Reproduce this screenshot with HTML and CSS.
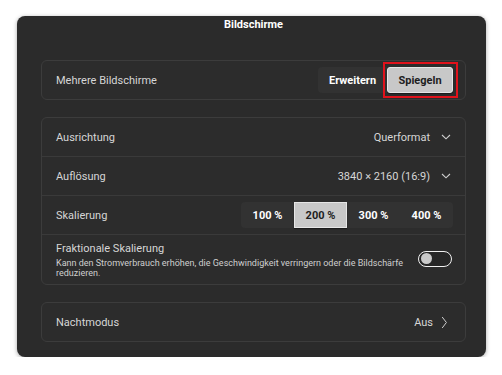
FILE: index.html
```html
<!DOCTYPE html>
<html lang="de">
<head>
<meta charset="utf-8">
<link rel="stylesheet" href="styles.css">
</head>
<body>
<div class="card">
  <div class="title">Bildschirme</div>

  <div class="group">
    <div class="row">
      <span class="label">Mehrere Bildschirme</span>
      <div class="seg seg-mode">
        <div class="seg-item w69">Erweitern</div>
        <div class="seg-item w66 active">Spiegeln<span class="mark"></span></div>
      </div>
    </div>
  </div>

  <div class="group">
    <div class="row">
      <span class="label">Ausrichtung</span>
      <div class="value">Querformat
        <svg class="chev" width="10" height="6" viewBox="0 0 10 6"><path d="M1 1 L5 4.8 L9 1" fill="none" stroke="#cfcfcf" stroke-width="1.1"/></svg>
      </div>
    </div>
    <div class="row">
      <span class="label">Auflösung</span>
      <div class="value">3840 × 2160 (16:9)
        <svg class="chev" width="10" height="6" viewBox="0 0 10 6"><path d="M1 1 L5 4.8 L9 1" fill="none" stroke="#cfcfcf" stroke-width="1.1"/></svg>
      </div>
    </div>
    <div class="row">
      <span class="label">Skalierung</span>
      <div class="seg seg-scale">
        <div class="seg-item w53">100 %</div>
        <div class="seg-item w53 active">200 %</div>
        <div class="seg-item w53">300 %</div>
        <div class="seg-item w53">400 %</div>
      </div>
    </div>
    <div class="row row-tall">
      <div class="text-col">
        <div class="label">Fraktionale Skalierung</div>
        <div class="desc">Kann den Stromverbrauch erhöhen, die Geschwindigkeit verringern oder die Bildschärfe reduzieren.</div>
      </div>
      <div class="toggle"><span class="knob"></span></div>
    </div>
  </div>

  <div class="group">
    <div class="row">
      <span class="label">Nachtmodus</span>
      <div class="value">Aus
        <svg class="chev-r" width="7" height="13" viewBox="0 0 7 13"><path d="M1.2 1 L5.4 6.5 L1.2 12" fill="none" stroke="#cfcfcf" stroke-width="1"/></svg>
      </div>
    </div>
  </div>
</div>
</body>
</html>
```

FILE: styles.css
```css
html, body {
  margin: 0;
  padding: 0;
  background: #ffffff;
}
body {
  font-family: Roboto, "Liberation Sans", sans-serif;
  -webkit-font-smoothing: antialiased;
}
.card {
  margin: 16px 0 0 17px;
  width: 469px;
  height: 341px;
  box-sizing: border-box;
  background: #2b2b2b;
  border-radius: 8px;
  box-shadow: 0 1px 4px rgba(0,0,0,0.35);
  padding: 2px 20px 0 24px;
  display: flex;
  flex-direction: column;
}
.title {
  text-align: center;
  color: #ffffff;
  font-weight: 700;
  font-size: 11px;
  line-height: 14px;
  height: 14px;
  margin-bottom: 28px;
}
.group {
  border: 1px solid #3c3c3c;
  border-radius: 6px;
  background: #2c2c2c;
  margin-bottom: 17px;
}
.row {
  height: 38px;
  display: flex;
  align-items: center;
  justify-content: space-between;
  padding: 0 13px 0 14px;
  border-top: 1px solid #3a3a3a;
}
.row:first-child {
  border-top: none;
}
.row-tall {
  height: 49px;
}
.label {
  color: #d6d6d6;
  font-size: 11px;
  line-height: 13px;
}
.value {
  color: #d6d6d6;
  font-size: 11px;
  display: flex;
  align-items: center;
}
.chev {
  margin-left: 11px;
  margin-right: 1px;
}
.chev-r {
  margin-left: 8px;
  margin-right: 4px;
}
.seg {
  display: flex;
  background: #323232;
  border-radius: 4px;
  height: 26px;
  margin-right: -1px;
}
.seg-item {
  position: relative;
  display: flex;
  align-items: center;
  justify-content: center;
  color: #ffffff;
  font-weight: 700;
  font-size: 11px;
  border-radius: 3px;
  box-sizing: border-box;
}
.w69 { width: 69px; }
.w66 { width: 66px; }
.w53 { width: 53px; }
.seg-item.active {
  background: #c8c8c8;
  color: #1e1e1e;
  border: 1px solid #e6e6e6;
  box-shadow: 0 1px 1px rgba(0,0,0,0.4);
}
.seg-scale .seg-item.active {
  border-radius: 0;
}
.mark {
  position: absolute;
  left: -5px;
  right: -6px;
  top: -6px;
  bottom: -6px;
  border: 2px solid #e0121b;
}
.text-col {
  display: flex;
  flex-direction: column;
  padding-top: 1px;
}
.desc {
  color: #cfcfcf;
  font-size: 9px;
  line-height: 10px;
  width: 352px;
  margin-top: 3px;
}
.toggle {
  width: 30px;
  height: 14px;
  border: 1.5px solid #f0f0f0;
  border-radius: 9px;
  background: #262626;
  margin-top: -2px;
  display: flex;
  align-items: center;
  padding-left: 2px;
}
.knob {
  width: 11px;
  height: 11px;
  border-radius: 50%;
  background: #c9c9c9;
}
```
